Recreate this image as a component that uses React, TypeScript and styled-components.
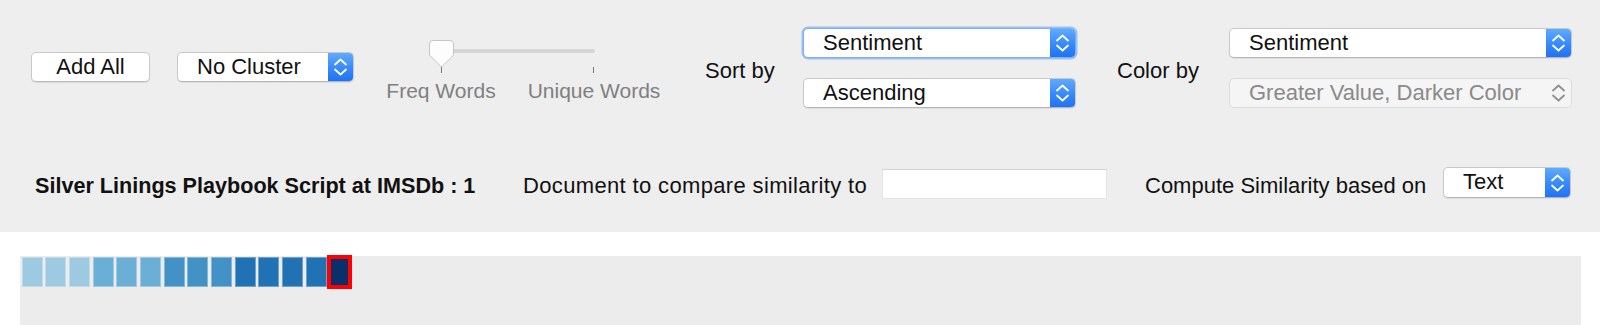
import React from "react";
import styled, { createGlobalStyle, css } from "styled-components";

const GlobalStyle = createGlobalStyle`
  html, body {
    margin: 0;
    padding: 0;
    background: #ffffff;
    font-family: "Liberation Sans", Arial, sans-serif;
    color: #111111;
  }
  * { box-sizing: border-box; }
`;

const Page = styled.div`
  width: 1600px;
  height: 325px;
  overflow: hidden;
  background: #ffffff;
`;

const TopPanel = styled.div`
  height: 232px;
  background: #eeeeee;
  padding-top: 27px;
  display: flex;
  flex-direction: column;
`;

const ControlRow = styled.div<{ $left: number; $gapTop?: number; $height: number }>`
  display: flex;
  align-items: flex-start;
  padding-left: ${(p) => p.$left}px;
  margin-top: ${(p) => p.$gapTop ?? 0}px;
  height: ${(p) => p.$height}px;
`;

const Slot = styled.div<{ $top?: number; $ml?: number }>`
  margin-top: ${(p) => p.$top ?? 0}px;
  margin-left: ${(p) => p.$ml ?? 0}px;
  flex: none;
`;

const PushButton = styled.button`
  width: 119px;
  height: 30px;
  background: #ffffff;
  border: 1px solid #c9c9c9;
  border-bottom-color: #b9b9b9;
  border-radius: 5px;
  box-shadow: 0 1px 1px rgba(0, 0, 0, 0.08);
  font-family: "Liberation Sans", Arial, sans-serif;
  font-size: 22px;
  color: #111111;
  padding: 0;
  line-height: 28px;
`;

const ComboBox = styled.div<{ $width: number; $focused?: boolean; $disabled?: boolean; $height?: number }>`
  width: ${(p) => p.$width}px;
  height: ${(p) => p.$height ?? 30}px;
  display: flex;
  align-items: stretch;
  background: #ffffff;
  border: 1px solid #c8c8c8;
  border-bottom-color: #b4b4b4;
  border-radius: 5px;
  box-shadow: 0 1px 1px rgba(0, 0, 0, 0.07);
  overflow: hidden;
  ${(p) =>
    p.$focused &&
    css`
      border-color: #7eaef2;
      box-shadow: 0 0 0 1.5px rgba(120, 172, 245, 0.7);
    `}
  ${(p) =>
    p.$disabled &&
    css`
      background: #f5f5f5;
      border-color: #dcdcdc;
      box-shadow: none;
    `}
`;

const ComboText = styled.span<{ $disabled?: boolean }>`
  flex: 1;
  padding-left: 19px;
  font-size: 22px;
  line-height: 28px;
  color: ${(p) => (p.$disabled ? "#8a8a8a" : "#111111")};
  white-space: nowrap;
  overflow: hidden;
`;

const ComboArrows = styled.span<{ $disabled?: boolean }>`
  width: 25px;
  flex: none;
  display: flex;
  align-items: center;
  justify-content: center;
  background: ${(p) =>
    p.$disabled ? "transparent" : "linear-gradient(#5fabfd 0%, #3b8cf9 50%, #1f72f5 100%)"};
`;

const Chevrons = ({ color }: { color: string }) => (
  <svg width="25" height="30" viewBox="0 0 25 30">
    <path d="M7 12.5 L12.5 7.5 L18 12.5" fill="none" stroke={color} strokeWidth="1.8" strokeLinecap="round" strokeLinejoin="round" />
    <path d="M7 17.5 L12.5 22.5 L18 17.5" fill="none" stroke={color} strokeWidth="1.8" strokeLinecap="round" strokeLinejoin="round" />
  </svg>
);

const Combo = ({
  label,
  width,
  focused,
  disabled,
  height,
}: {
  label: string;
  width: number;
  focused?: boolean;
  disabled?: boolean;
  height?: number;
}) => (
  <ComboBox $width={width} $focused={focused} $disabled={disabled} $height={height}>
    <ComboText $disabled={disabled}>{label}</ComboText>
    <ComboArrows $disabled={disabled}>
      <Chevrons color={disabled ? "#8e8e8e" : "#ffffff"} />
    </ComboArrows>
  </ComboBox>
);

const ComboStack = styled.div`
  display: flex;
  flex-direction: column;
  gap: 20px;
`;

const FieldLabel = styled.div<{ $width?: number; $bold?: boolean; $size?: number; $track?: number }>`
  width: ${(p) => (p.$width ? `${p.$width}px` : "auto")};
  font-size: ${(p) => p.$size ?? 22}px;
  letter-spacing: ${(p) => p.$track ?? 0}px;
  line-height: 25px;
  font-weight: ${(p) => (p.$bold ? 700 : 400)};
  color: #111111;
  white-space: nowrap;
  flex: none;
`;

/* slider */
const SliderBlock = styled.div`
  width: 283px;
  display: flex;
  flex-direction: column;
`;

const SliderTrackArea = styled.div`
  position: relative;
  height: 33px;
  padding-top: 9px;
`;

const Track = styled.div`
  margin-left: 49px;
  width: 165px;
  height: 4px;
  border-radius: 2px;
  background: #d6d6d6;
`;

const ThumbWrap = styled.div`
  position: absolute;
  left: 48px;
  top: 0;
  width: 25px;
  height: 28px;
`;

const Tick = styled.div<{ $x: number }>`
  position: absolute;
  left: ${(p) => p.$x}px;
  top: 27px;
  width: 1px;
  height: 6px;
  background: #777777;
`;

const SliderLabels = styled.div`
  display: flex;
  gap: 23px;
  margin-top: 5px;
`;

const SliderLabel = styled.div<{ $width: number }>`
  width: ${(p) => p.$width}px;
  text-align: center;
  font-size: 21px;
  line-height: 25px;
  color: #808080;
  white-space: nowrap;
`;

const Thumb = () => (
  <svg width="25" height="28" viewBox="0 0 25 28">
    <path
      d="M4 0.5 H21 Q24.5 0.5 24.5 4 V15 L12.5 27 L0.5 15 V4 Q0.5 0.5 4 0.5 Z"
      fill="#fdfdfd"
      stroke="#c6c6c6"
      strokeWidth="1"
    />
  </svg>
);

const TextField = styled.div`
  width: 225px;
  height: 30px;
  background: #ffffff;
  border: 1px solid #e4e4e4;
  border-top-color: #d0d0d0;
  flex: none;
`;

/* chart */
const WhiteGap = styled.div`
  height: 24px;
`;

const ChartBox = styled.div`
  margin-left: 20px;
  width: 1561px;
  height: 80px;
  background: #ececec;
  padding: 1px 0 0 1.5px;
`;

const CellRow = styled.div`
  display: flex;
  gap: 2.68px;
`;

const Cell = styled.div<{ $color: string; $selected?: boolean }>`
  width: 21px;
  height: 30px;
  background: ${(p) => p.$color};
  border: 1px solid rgba(255, 255, 255, 0.35);
  ${(p) =>
    p.$selected &&
    css`
      border: none;
      box-shadow: 0 0 0 2px #ff0000, inset 0 0 0 2px #ff0000;
    `}
`;

const cells = [
  "#9ecae1",
  "#9ecae1",
  "#9ecae1",
  "#6baed6",
  "#6baed6",
  "#6baed6",
  "#4292c6",
  "#4292c6",
  "#4292c6",
  "#2171b5",
  "#2171b5",
  "#2171b5",
  "#2171b5",
  "#08306b",
];

export default function App() {
  return (
    <Page>
      <GlobalStyle />
      <TopPanel>
        <ControlRow $left={31} $height={82}>
          <Slot $top={25}>
            <PushButton>Add All</PushButton>
          </Slot>
          <Slot $top={25} $ml={27}>
            <Combo label="No Cluster" width={177} />
          </Slot>
          <Slot $top={13} $ml={27}>
            <SliderBlock>
              <SliderTrackArea>
                <Track />
                <ThumbWrap>
                  <Thumb />
                </ThumbWrap>
                <Tick $x={60} />
                <Tick $x={212} />
              </SliderTrackArea>
              <SliderLabels>
                <SliderLabel $width={120}>Freq Words</SliderLabel>
                <SliderLabel $width={140}>Unique Words</SliderLabel>
              </SliderLabels>
            </SliderBlock>
          </Slot>
          <Slot $top={31} $ml={41}>
            <FieldLabel $width={98}>Sort by</FieldLabel>
          </Slot>
          <Slot $top={1}>
            <ComboStack>
              <Combo label="Sentiment" width={273} focused />
              <Combo label="Ascending" width={273} />
            </ComboStack>
          </Slot>
          <Slot $top={31} $ml={41}>
            <FieldLabel $width={112}>Color by</FieldLabel>
          </Slot>
          <Slot $top={1}>
            <ComboStack>
              <Combo label="Sentiment" width={343} />
              <Combo label="Greater Value, Darker Color" width={343} disabled />
            </ComboStack>
          </Slot>
        </ControlRow>
        <ControlRow $left={35} $gapTop={58} $height={32}>
          <Slot $top={6}>
            <FieldLabel $bold $size={21.6} $width={488}>
              Silver Linings Playbook Script at IMSDb : 1
            </FieldLabel>
          </Slot>
          <Slot $top={6}>
            <FieldLabel $width={359} $track={0.35}>
              Document to compare similarity to
            </FieldLabel>
          </Slot>
          <Slot $top={2}>
            <TextField />
          </Slot>
          <Slot $top={6} $ml={38}>
            <FieldLabel $width={298}>Compute Similarity based on</FieldLabel>
          </Slot>
          <Slot>
            <Combo label="Text" width={128} height={31} />
          </Slot>
        </ControlRow>
      </TopPanel>
      <WhiteGap />
      <ChartBox>
        <CellRow>
          {cells.map((c, i) => (
            <Cell key={i} $color={c} $selected={i === cells.length - 1} />
          ))}
        </CellRow>
      </ChartBox>
    </Page>
  );
}
